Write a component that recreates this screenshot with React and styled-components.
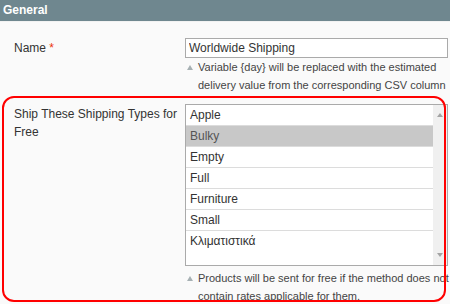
import React from "react";
import styled, { createGlobalStyle } from "styled-components";

const GlobalStyle = createGlobalStyle`
  html, body {
    margin: 0;
    padding: 0;
    overflow: hidden;
    background: #fafafa;
  }
  body {
    font-family: "Liberation Sans", Arial, sans-serif;
    color: #333;
  }
`;

const Section = styled.div`
  width: 450px;
`;

const SectionHeader = styled.div`
  height: 21px;
  line-height: 21px;
  padding-left: 3px;
  background: #6f878f;
  border-bottom: 1px solid #f2f2f2;
  color: #fff;
  font-weight: bold;
  font-size: 12px;
`;

const Fields = styled.div`
  padding-top: 16px;
`;

const FieldRow = styled.div`
  position: relative;
  display: grid;
  grid-template-columns: 171px 263px;
  align-items: start;
  margin: ${(props) => (props.$highlight ? "2px 4px 0 2px" : "0 4px 0 2px")};
  padding: ${(props) => (props.$highlight ? "8px 0 0 12px" : "0 0 0 12px")};
  height: ${(props) => (props.$highlight ? "206px" : "auto")};
  box-sizing: border-box;

  &::after {
    content: "";
    display: ${(props) => (props.$highlight ? "block" : "none")};
    position: absolute;
    inset: 0;
    border: 2px solid #ff0000;
    border-radius: 12px;
    pointer-events: none;
  }
`;

const Label = styled.label`
  font-size: 12px;
  line-height: 18px;
  padding-top: 1px;
  padding-right: 6px;
  color: #333;
`;

const Required = styled.span`
  color: #eb340a;
`;

const Value = styled.div`
  display: flex;
  flex-direction: column;
`;

const TextInput = styled.input`
  box-sizing: border-box;
  width: 100%;
  height: 20px;
  margin: 0;
  padding: 0 3px;
  border: 1px solid #aaa;
  background: #fff;
  color: #333;
  font-family: inherit;
  font-size: 12px;
  outline: none;
`;

const Note = styled.div`
  display: flex;
  width: 269px;
  margin-top: ${(props) => props.$gap || 0}px;
  font-size: 11px;
  line-height: 18px;
  color: #444;
`;

const NoteMark = styled.span`
  flex: 0 0 13px;
  &::before {
    content: "";
    display: block;
    width: 0;
    height: 0;
    margin: 7px 0 0 2px;
    border-left: 3px solid transparent;
    border-right: 3px solid transparent;
    border-bottom: 5px solid #a6b0b3;
  }
`;

const NoteText = styled.span`
  flex: 1;
`;

const MultiSelect = styled.div`
  display: flex;
  box-sizing: border-box;
  width: 100%;
  height: 162px;
  border: 1px solid #aaa;
  background: #fff;
`;

const OptionList = styled.ul`
  flex: 1;
  margin: 0;
  padding: 0;
  list-style: none;
`;

const Option = styled.li`
  height: 20px;
  line-height: 20px;
  padding: 0 4px;
  font-size: 12px;
  color: ${(props) => (props.$selected ? "#555" : "#333")};
  background: ${(props) => (props.$selected ? "#c8c8c8" : "#fff")};
  border-bottom: 1px solid #dcdcdc;

  &:last-child {
    border-bottom: none;
  }
`;

const Scrollbar = styled.div`
  flex: 0 0 14px;
  display: flex;
  flex-direction: column;
  justify-content: space-between;
  align-items: center;
  padding: 8px 0;
  box-sizing: border-box;
  background: #f0f0f0;
`;

const Arrow = styled.span`
  width: 0;
  height: 0;
  border-left: 3px solid transparent;
  border-right: 3px solid transparent;
  ${(props) =>
    props.$down
      ? "border-top: 4px solid #a3a3a3;"
      : "border-bottom: 4px solid #a3a3a3;"}
`;

const shippingTypes = [
  "Apple",
  "Bulky",
  "Empty",
  "Full",
  "Furniture",
  "Small",
  "Κλιματιστικά",
];

const nameNote =
  "Variable {day} will be replaced with the estimated delivery value from the corresponding CSV column";
const freeNote =
  "Products will be sent for free if the method does not contain rates applicable for them.";

export default function App() {
  return (
    <>
      <GlobalStyle />
      <Section>
        <SectionHeader>General</SectionHeader>
        <Fields>
          <FieldRow>
            <Label>
              Name <Required>*</Required>
            </Label>
            <Value>
              <TextInput readOnly defaultValue="Worldwide Shipping" />
              <Note>
                <NoteMark />
                <NoteText>{nameNote}</NoteText>
              </Note>
            </Value>
          </FieldRow>

          <FieldRow $highlight>
            <Label>Ship These Shipping Types for Free</Label>
            <Value>
              <MultiSelect>
                <OptionList>
                  {shippingTypes.map((type) => (
                    <Option key={type} $selected={type === "Bulky"}>
                      {type}
                    </Option>
                  ))}
                </OptionList>
                <Scrollbar>
                  <Arrow />
                  <Arrow $down />
                </Scrollbar>
              </MultiSelect>
              <Note $gap={3}>
                <NoteMark />
                <NoteText>{freeNote}</NoteText>
              </Note>
            </Value>
          </FieldRow>
        </Fields>
      </Section>
    </>
  );
}
